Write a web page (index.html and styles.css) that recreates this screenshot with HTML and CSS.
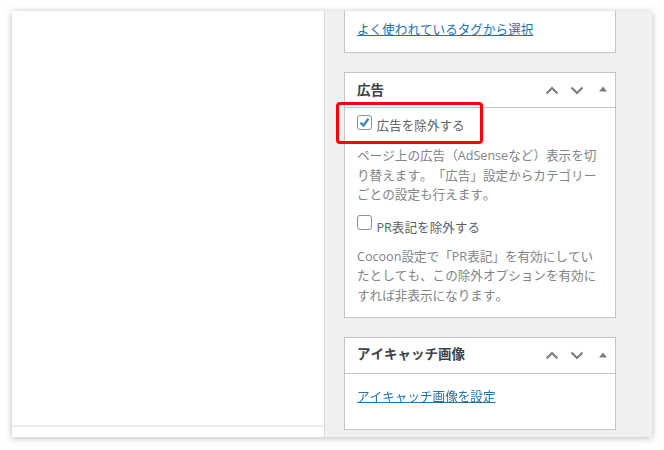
FILE: index.html
```html
<!DOCTYPE html>
<html lang="ja">
<head>
<meta charset="utf-8">
<title>広告</title>
<link rel="stylesheet" href="styles.css">
</head>
<body>
<div class="window">
  <main class="editor"><div class="editor-foot"></div></main>
  <aside class="sidebar">
    <section class="panel panel-tags">
      <a class="link" href="#">よく使われているタグから選択</a>
    </section>
    <section class="panel panel-ad">
      <header class="panel-head">
        <h2>広告</h2>
        <div class="controls">
          <svg class="chev" viewBox="0 0 14 9"><path d="M1.5 7.5 7 2l5.500 5.500"/></svg>
          <svg class="chev" viewBox="0 0 14 9"><path d="M1.500 1.500 7 7l5.500-5.500"/></svg>
          <svg class="tri" viewBox="0 0 8 6"><path d="M4 0.500 8 5.500H0z"/></svg>
        </div>
      </header>
      <div class="panel-body">
        <label class="check first"><span class="box on"><svg viewBox="0 0 16 16"><path d="M3.200 8.200 6.800 11.800 12.800 3.400"/></svg></span>広告を除外する</label>
        <p class="desc">ページ上の広告（AdSenseなど）表示を切り替えます。「広告」設定からカテゴリーごとの設定も行えます。</p>
        <label class="check"><span class="box"></span>PR表記を除外する</label>
        <p class="desc">Cocoon設定で「PR表記」を有効にしていたとしても、この除外オプションを有効にすれば非表示になります。</p>
      </div>
      <div class="highlight"></div>
    </section>
    <section class="panel panel-thumb">
      <header class="panel-head tall">
        <h2>アイキャッチ画像</h2>
        <div class="controls">
          <svg class="chev" viewBox="0 0 14 9"><path d="M1.5 7.5 7 2l5.500 5.500"/></svg>
          <svg class="chev" viewBox="0 0 14 9"><path d="M1.500 1.500 7 7l5.500-5.500"/></svg>
          <svg class="tri" viewBox="0 0 8 6"><path d="M4 0.500 8 5.500H0z"/></svg>
        </div>
      </header>
      <div class="panel-link"><a class="link" href="#">アイキャッチ画像を設定</a></div>
    </section>
  </aside>
</div>
</body>
</html>
```
FILE: styles.css
```css
* { box-sizing: border-box; }
html, body { margin: 0; height: 100%; background: #fff; overflow: hidden; }
body {
  padding: 11px 12px 13px;
  font-family: "Open Sans", "Noto Sans CJK JP", sans-serif;
  font-size: 12.600px;
  color: #50575e;
  text-spacing-trim: space-all;
  font-kerning: none;
}
.window {
  display: flex;
  height: 426px;
  border-radius: 0 3px 3px 0;
  box-shadow: 0 1px 7px rgba(0, 0, 0, .28);
  background: #f0f0f1;
  overflow: hidden;
}
.editor {
  width: 313px;
  flex: none;
  background: #fff;
  border-right: 1px solid #dcdcde;
  display: flex;
  flex-direction: column;
  justify-content: flex-end;
}
.editor-foot { height: 12px; border-top: 2px solid #ececec; }
.sidebar {
  flex: 1;
  padding: 0 36px 0 19px;
  display: flex;
  flex-direction: column;
  gap: 19px;
  filter: blur(.35px);
}
.panel {
  position: relative;
  width: 272px;
  flex: none;
  background: #fff;
  border: 1px solid #c3c4c7;
}
.panel-tags { height: 42px; border-top: 0; padding: 9px 12px 0; line-height: 20px; }
.panel-ad { height: 246px; }
.panel-thumb { height: 93px; }
.link { color: #2271b1; text-decoration: underline; font-size: 12.600px; }
.panel-head {
  height: 35px;
  display: flex;
  align-items: center;
  justify-content: space-between;
  padding: 0 8px 0 12px;
  border-bottom: 1px solid #c3c4c7;
}
.panel-head.tall { height: 36px; }
.panel-head.tall h2 { margin-top: -2px; }
h2 { margin: 0 0 1px; font-size: 13.500px; line-height: 18px; font-weight: 700; color: #3c434a; }
.controls { display: flex; align-items: center; gap: 11px; }
.chev { width: 14px; height: 9px; fill: none; stroke: #787c82; stroke-width: 2; }
.tri { width: 8px; height: 6px; fill: #787c82; margin-left: 4px; margin-bottom: 2px; }
.panel-body { padding: 6px 12px 0; }
.check { display: flex; align-items: center; height: 20px; margin-bottom: 10px; font-size: 12.600px; color: #5a6066; }
.check.first { margin-bottom: 12px; }
.box {
  width: 15px;
  height: 15px;
  flex: none;
  margin: 0 4.500px 9px 0;
  border: 1px solid #8c8f94;
  border-radius: 3px;
  background: #fff;
}
.first .box { margin-bottom: 4px; }
.box svg { display: block; width: 13px; height: 13px; fill: none; stroke: #3582c4; stroke-width: 2.800; }
.desc { margin: 0 0 12px; font-size: 12.600px; line-height: 19.500px; color: #808488; }
.panel-link { padding: 13px 12px 0; line-height: 20px; }
.highlight {
  position: absolute;
  left: -9px;
  top: 29px;
  width: 147px;
  height: 42px;
  border: 3px solid #f00;
  border-radius: 4px;
}
```
